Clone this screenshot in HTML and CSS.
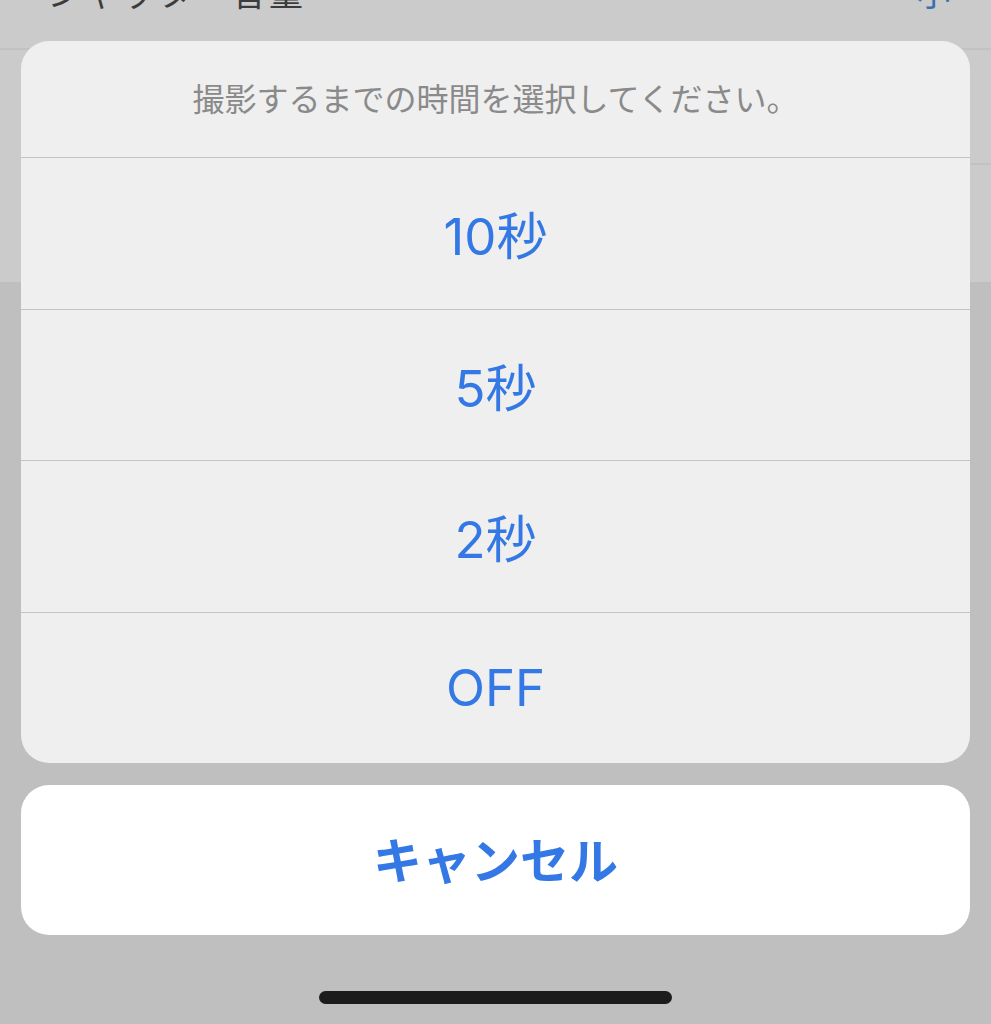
FILE: index.html
```html
<!DOCTYPE html>
<html lang="ja">
<head>
<meta charset="utf-8">
<title>セルフタイマー</title>
<link rel="stylesheet" href="styles.css">
</head>
<body>
<div class="screen">
  <div class="backdrop">
    <div class="bg-row">
      <span class="bg-label">シャッター音量</span>
      <span class="bg-value">小</span>
    </div>
    <div class="bg-row"></div>
    <div class="bg-row last"></div>
  </div>

  <div class="sheet">
    <div class="group">
      <div class="title">撮影するまでの時間を選択してください。</div>
      <div class="option">10秒</div>
      <div class="option">5秒</div>
      <div class="option">2秒</div>
      <div class="option">OFF</div>
    </div>
    <div class="cancel">キャンセル</div>
    <div class="home-indicator"></div>
  </div>
</div>
</body>
</html>
```

FILE: styles.css
```css
* { box-sizing: border-box; }

html, body {
  margin: 0;
  padding: 0;
}

body {
  background: #bfbfbf;
  font-family: Inter, "Noto Sans CJK JP", sans-serif;
  width: 991px;
  height: 1024px;
  overflow: hidden;
}

.screen {
  position: relative;
  display: flow-root;
  width: 991px;
  height: 1024px;
  overflow: hidden;
}

.backdrop {
  margin-top: -65px;
  background: #cbcbcb;
}

.bg-row {
  height: 115px;
  display: flex;
  align-items: center;
  justify-content: space-between;
  padding: 0 41px 0 0;
  border-bottom: 2px solid #c2c2c2;
  margin-left: 47px;
}

.bg-row:first-child {
  margin-left: 0;
  padding-left: 47px;
}

.bg-row.last {
  height: 117px;
  border-bottom: none;
}

.bg-label {
  font-size: 34px;
  color: #3c3c3c;
  letter-spacing: 3px;
}

.bg-value {
  font-size: 33px;
  color: #3a6fae;
}

.sheet {
  position: absolute;
  top: 41px;
  left: 21px;
  width: 949px;
  display: flex;
  flex-direction: column;
  gap: 22px;
}

.group {
  background: #efefef;
  border-radius: 28px;
  overflow: hidden;
  display: flex;
  flex-direction: column;
}

.title {
  height: 116px;
  display: flex;
  align-items: center;
  justify-content: center;
  font-size: 32px;
  color: #8a8a8a;
  padding-bottom: 4px;
}

.option {
  height: 151.5px;
  display: flex;
  align-items: center;
  justify-content: center;
  border-top: 1.5px solid #c4c4c4;
  font-size: 51px;
  color: #3478e6;
  padding-top: 0;
}

.cancel {
  height: 150px;
  background: #ffffff;
  border-radius: 28px;
  display: flex;
  align-items: center;
  justify-content: center;
  font-size: 49px;
  font-weight: 700;
  color: #3478e6;
  padding-bottom: 6px;
}

.home-indicator {
  align-self: center;
  width: 353px;
  height: 13px;
  border-radius: 7px;
  background: #1c1c1c;
  margin-top: 34px;
}
```
